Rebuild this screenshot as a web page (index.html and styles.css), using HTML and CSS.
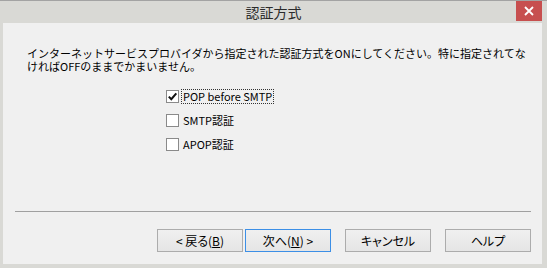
FILE: index.html
```html
<!DOCTYPE html>
<html lang="ja">
<head>
<meta charset="utf-8">
<title>認証方式</title>
<link rel="stylesheet" href="styles.css">
</head>
<body>
<div class="window">
  <div class="titlebar">
    <span class="title">認証方式</span>
    <span class="close" aria-label="閉じる">
      <svg width="10" height="10" viewBox="0 0 10 10"><path d="M1 1 L9 9 M9 1 L1 9" stroke="#fff" stroke-width="1.8" fill="none"/></svg>
    </span>
  </div>
  <div class="client">
    <p class="message">インターネットサービスプロバイダから指定された認証方式をONにしてください。特に指定されてな<br>ければOFFのままでかまいません。</p>
    <ul class="options">
      <li class="option">
        <span class="box"><svg width="11" height="11" viewBox="0 0 11 11"><path d="M1.8 5.6 L4.3 8.2 L9.3 2.4" stroke="#111" stroke-width="2" fill="none"/></svg></span>
        <span class="label focused">POP before SMTP</span>
      </li>
      <li class="option">
        <span class="box"></span>
        <span class="label">SMTP認証</span>
      </li>
      <li class="option">
        <span class="box"></span>
        <span class="label">APOP認証</span>
      </li>
    </ul>
    <div class="separator"></div>
    <div class="buttons">
      <span class="btn">&lt; 戻る(<u>B</u>)</span>
      <span class="btn default">次へ(<u>N</u>) &gt;</span>
      <span class="btn wide-gap">キャンセル</span>
      <span class="btn wide-gap">ヘルプ</span>
    </div>
  </div>
</div>
</body>
</html>
```

FILE: styles.css
```css
* { box-sizing: border-box; }
html, body { margin: 0; padding: 0; }
body {
  width: 547px;
  height: 268px;
  overflow: hidden;
  font-family: "Noto Sans CJK JP", "Noto Sans", sans-serif;
  color: #000;
}
.window {
  width: 547px;
  height: 268px;
  background: #d9d9d5;
  border-top: 1px solid #a3a3a3;
  display: flex;
  flex-direction: column;
}
.titlebar {
  height: 22px;
  display: grid;
  grid-template-columns: 1fr auto 1fr;
  align-items: center;
}
.title {
  grid-column: 2;
  font-size: 14px;
  line-height: 22px;
  color: #2b2b2b;
  margin-top: -1px;
}
.close {
  grid-column: 3;
  justify-self: end;
  align-self: start;
  width: 26px;
  height: 20px;
  margin-right: 5px;
  background: #c74f4f;
  display: flex;
  align-items: center;
  justify-content: center;
}
.close svg { display: block; }
.client {
  flex: 1;
  margin: 0 5px 4px 3px;
  background: #f0f0f0;
  display: flex;
  flex-direction: column;
  padding: 24px 0 12px 0;
}
.message {
  margin: 0;
  padding-left: 24px;
  font-size: 11px;
  line-height: 13px;
  white-space: nowrap;
}
.options {
  list-style: none;
  margin: 11px 0 0 0;
  padding: 0 0 0 163px;
}
.option {
  height: 24px;
  display: flex;
  align-items: center;
}
.box {
  width: 13px;
  height: 13px;
  border: 1px solid #8a8a8a;
  background: #fff;
  display: flex;
  align-items: center;
  justify-content: center;
  margin-right: 2px;
}
.box svg { display: block; }
.label {
  font-size: 11px;
  line-height: 13px;
  padding: 0 1px;
  border: 1px dotted transparent;
}
.label.focused {
  border-color: #333;
}
.separator {
  margin: auto 11px 0 12px;
  height: 1px;
  background: #a0a0a0;
}
.buttons {
  margin-top: 17px;
  display: flex;
  justify-content: flex-end;
  padding-right: 11px;
}
.btn {
  width: 86px;
  height: 23px;
  border: 1px solid #acacac;
  background: linear-gradient(#f0f0f0, #e5e5e5);
  font-size: 12px;
  font-feature-settings: "palt";
  line-height: 21px;
  text-align: center;
}
.btn + .btn { margin-left: 2px; }
.btn.wide-gap { margin-left: 14px; }
.btn.default {
  border-color: #3c8fe6;
}
.btn u { text-underline-offset: 1px; }
```
